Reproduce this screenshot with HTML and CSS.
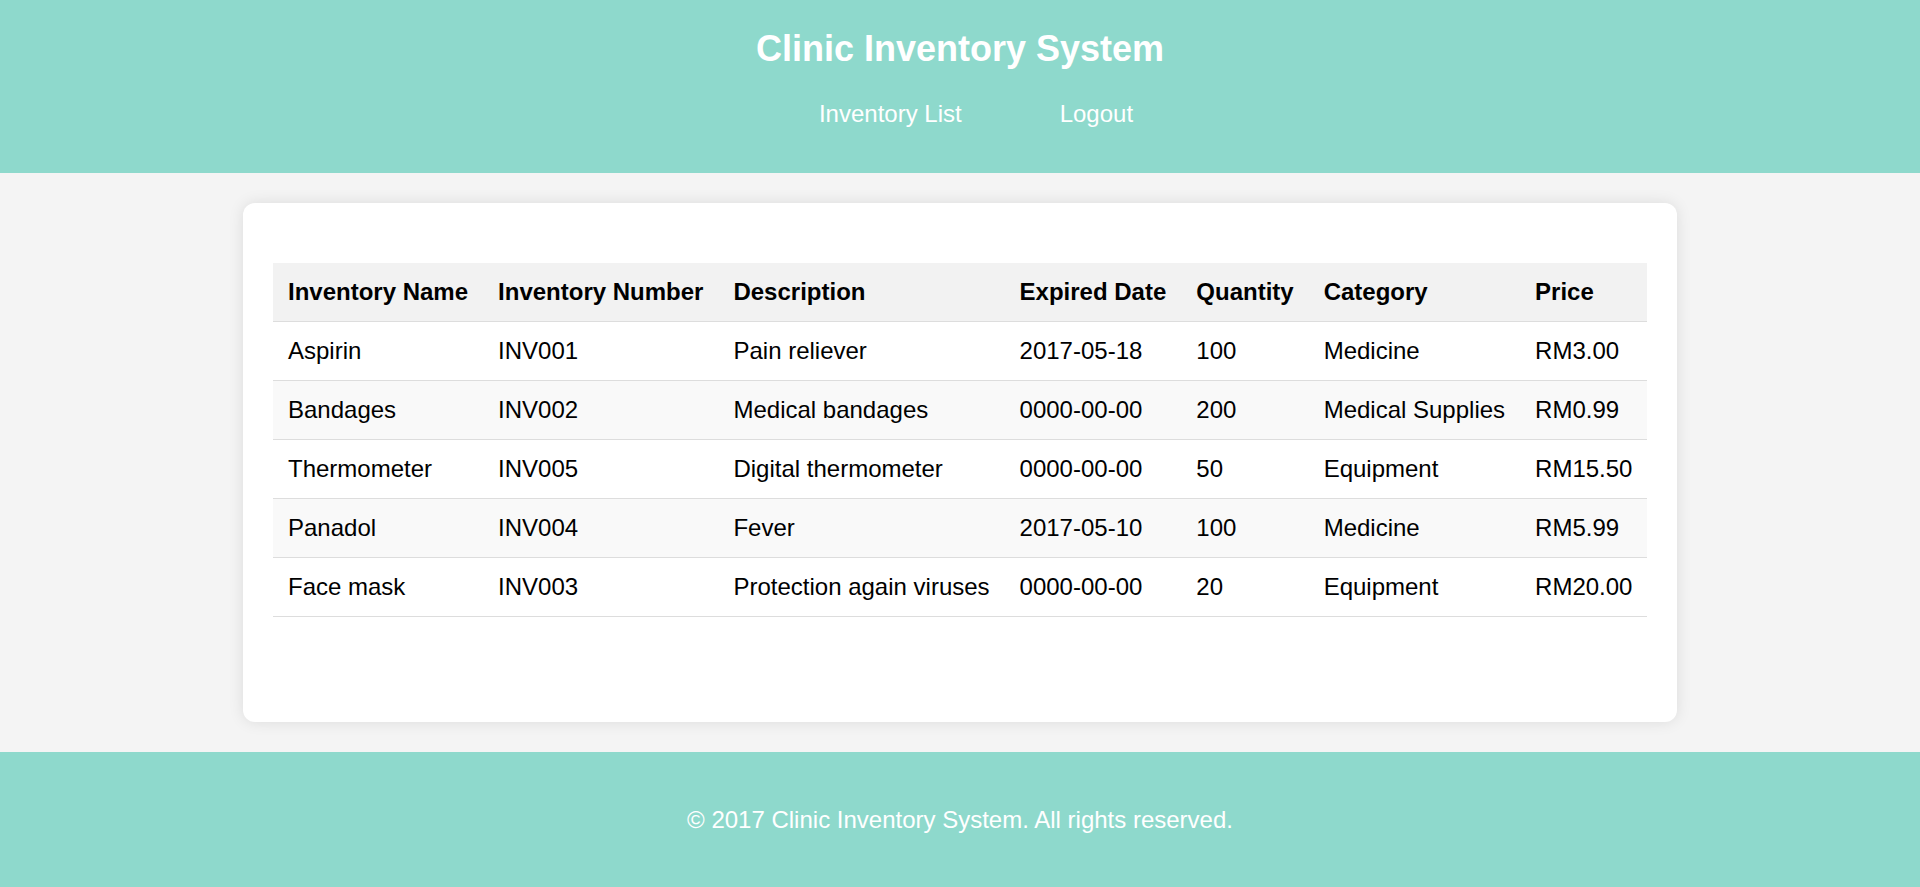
FILE: index.html
```html
<!DOCTYPE html>
<html lang="en">
<head>
<meta charset="utf-8">
<title>Clinic Inventory System</title>
<link rel="stylesheet" href="styles.css">
</head>
<body>
<header class="site-header">
  <h1 class="site-title">Clinic Inventory System</h1>
  <nav class="site-nav">
    <a class="nav-link" href="#">Inventory List</a>
    <a class="nav-link" href="#">Logout</a>
  </nav>
</header>
<main class="main">
  <section class="card">
    <table class="inv-table">
      <thead>
        <tr>
          <th>Inventory Name</th>
          <th>Inventory Number</th>
          <th>Description</th>
          <th>Expired Date</th>
          <th>Quantity</th>
          <th>Category</th>
          <th>Price</th>
        </tr>
      </thead>
      <tbody>
        <tr><td>Aspirin</td><td>INV001</td><td>Pain reliever</td><td>2017-05-18</td><td>100</td><td>Medicine</td><td>RM3.00</td></tr>
        <tr><td>Bandages</td><td>INV002</td><td>Medical bandages</td><td>0000-00-00</td><td>200</td><td>Medical Supplies</td><td>RM0.99</td></tr>
        <tr><td>Thermometer</td><td>INV005</td><td>Digital thermometer</td><td>0000-00-00</td><td>50</td><td>Equipment</td><td>RM15.50</td></tr>
        <tr><td>Panadol</td><td>INV004</td><td>Fever</td><td>2017-05-10</td><td>100</td><td>Medicine</td><td>RM5.99</td></tr>
        <tr><td>Face mask</td><td>INV003</td><td>Protection again viruses</td><td>0000-00-00</td><td>20</td><td>Equipment</td><td>RM20.00</td></tr>
      </tbody>
    </table>
  </section>
</main>
<footer class="site-footer">
  <p class="footer-text">&copy; 2017 Clinic Inventory System. All rights reserved.</p>
</footer>
</body>
</html>
```
FILE: styles.css
```css
* { box-sizing: border-box; }
html, body { margin: 0; padding: 0; }
body {
  font-family: "Liberation Sans", Arial, sans-serif;
  font-size: 24px;
  background: #f4f4f4;
  color: #000;
}
.site-header {
  background: #8ed9cc;
  color: #fff;
  text-align: center;
  padding: 28px 0 45px;
}
.site-title {
  margin: 0 0 31px;
  font-size: 36px;
  line-height: 41px;
  font-weight: bold;
}
.site-nav {
  display: flex;
  justify-content: center;
  gap: 98px;
  padding-left: 32px;
  line-height: 28px;
}
.nav-link {
  color: #fff;
  text-decoration: none;
}
.main {
  padding: 30px 0;
}
.card {
  width: 1434px;
  margin: 0 auto;
  background: #fff;
  border-radius: 12px;
  box-shadow: 0 0 15px rgba(0, 0, 0, 0.1);
  padding: 60px 30px 105px;
}
.inv-table {
  width: 100%;
  border-collapse: collapse;
}
.inv-table th,
.inv-table td {
  text-align: left;
  padding: 15px;
  line-height: 28px;
  border-bottom: 1px solid #dddddd;
  white-space: nowrap;
}
.inv-table th {
  background: #f2f2f2;
  font-weight: bold;
}
.inv-table tbody tr:nth-child(even) {
  background: #f9f9f9;
}
.site-footer {
  background: #8ed9cc;
  color: #fff;
  text-align: center;
  padding: 54px 0;
}
.footer-text {
  margin: 0;
  line-height: 27px;
}
```
